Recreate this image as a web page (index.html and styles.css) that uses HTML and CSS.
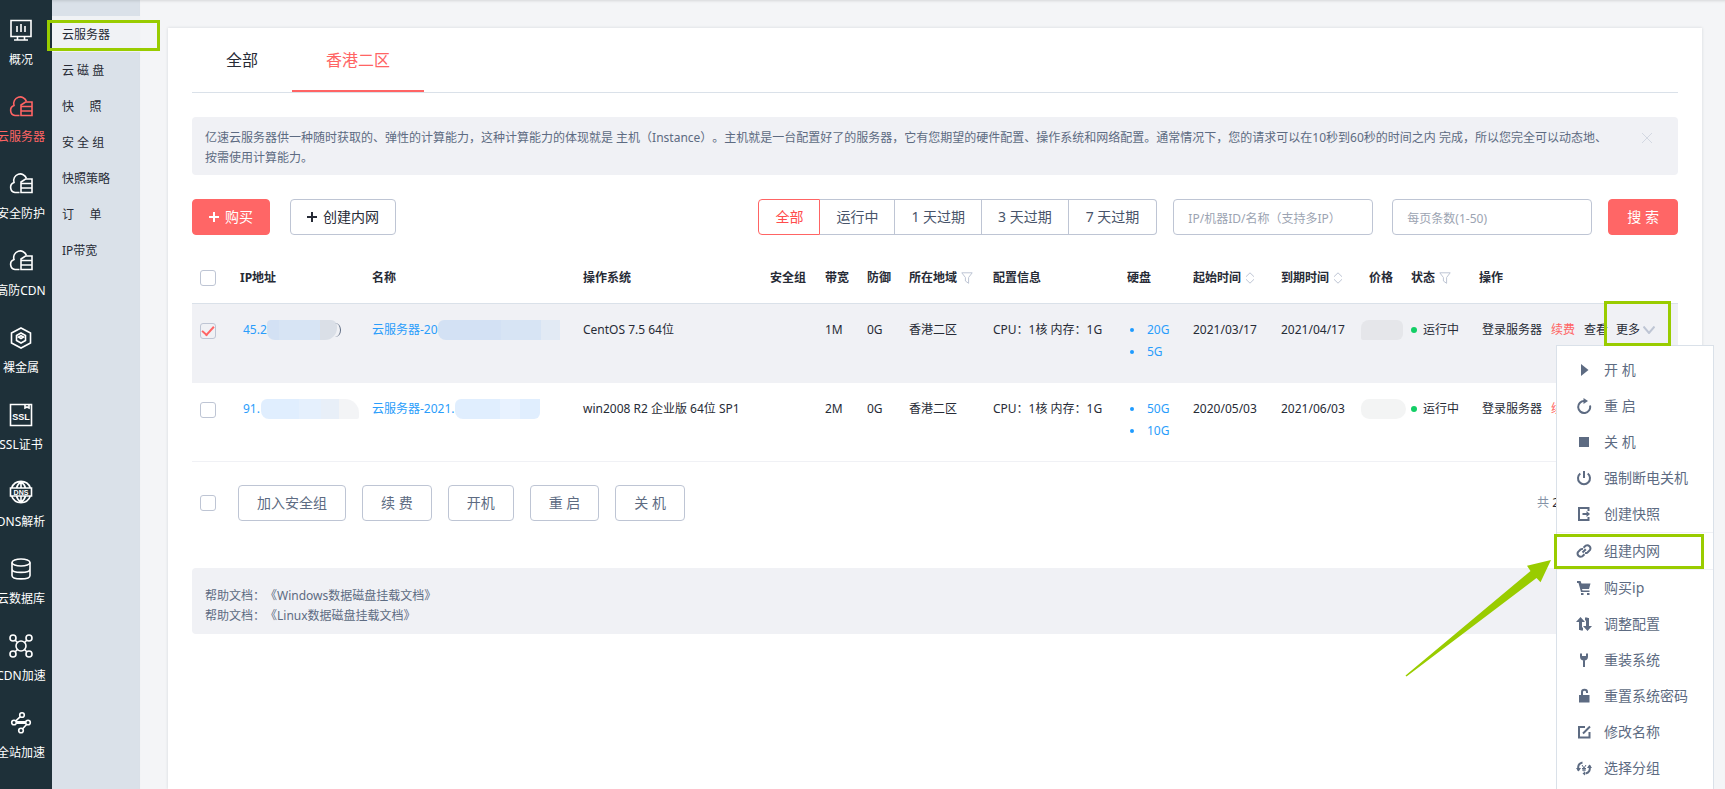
FILE: index.html
```html
<!DOCTYPE html>
<html lang="zh-CN">
<head>
<meta charset="utf-8">
<title>云服务器</title>
<link rel="stylesheet" href="styles.css">
</head>
<body>
<svg class="defs" aria-hidden="true">
  <symbol id="cloud" viewBox="0 0 24 24"><path d="M10.500 20.500H6A5.200 5.200 0 0 1 5 10.500 6.500 6.500 0 0 1 17.500 6.500"/><path d="M12 20.500V10L16.500 7H23V20.500ZM12.500 11.500H23M12.500 16H23"/></symbol>
  <symbol id="funnel" viewBox="0 0 12 12"><path d="M.8.8H11.200L7.600 5.500V11.300L4.400 9V5.500Z"/></symbol>
  <symbol id="sort" viewBox="0 0 10 12"><path d="M1 4.700 5 .8 9 4.700M1 7.300 5 11.200 9 7.300"/></symbol>
</svg>
<div class="app">
  <nav class="rail" aria-label="产品">
    <a class="rail-item" href="#"><svg class="line" viewBox="0 0 24 24"><path d="M2 2.500H22V18.500H2ZM8 8V14M12 6V14M16 8V14M8.500 19V22M15.500 19V22M5 22H19"/></svg><span>概况</span></a>
    <a class="rail-item active" href="#"><svg class="line"><use href="#cloud"/></svg><span>云服务器</span></a>
    <a class="rail-item" href="#"><svg class="line"><use href="#cloud"/></svg><span>安全防护</span></a>
    <a class="rail-item" href="#"><svg class="line"><use href="#cloud"/></svg><span>高防CDN</span></a>
    <a class="rail-item" href="#"><svg class="line" viewBox="0 0 24 24"><path d="M12 2 21.500 7V17L12 22 2.500 17V7Z"/><path d="M12 7 16.500 9.500V14.500L12 17 7.500 14.500V9.500Z"/><path d="M9.500 11 12 12.500 14.500 11 12 9.700Z"/></svg><span>裸金属</span></a>
    <a class="rail-item" href="#"><svg class="line" viewBox="0 0 24 24"><path d="M1.500 1.500H22.500V22.500H1.500ZM16 2V5L18 4 20 5V2"/><text class="ssl" x="12" y="17" text-anchor="middle">SSL</text></svg><span>SSL证书</span></a>
    <a class="rail-item" href="#"><svg class="line" viewBox="0 0 24 24"><path d="M2.600 8A10 10 0 0 1 21.400 8M2.600 16A10 10 0 0 0 21.400 16M1.500 8H22.500V16H1.500ZM7.500 8Q8.500 4 12 2 15.500 4 16.500 8M7.500 16Q8.500 20 12 22 15.500 20 16.500 16M12 2V8M12 16V22"/><text class="dns" x="12" y="14.500" text-anchor="middle">DNS</text></svg><span>DNS解析</span></a>
    <a class="rail-item" href="#"><svg class="line" viewBox="0 0 24 24"><ellipse cx="12" cy="5.500" rx="9" ry="3.500"/><path d="M3 5.500V18.500C3 23 21 23 21 18.500V5.500M3 12C3 16.500 21 16.500 21 12"/></svg><span>云数据库</span></a>
    <a class="rail-item" href="#"><svg class="line" viewBox="0 0 24 24"><circle cx="12" cy="12" r="5"/><circle cx="4" cy="4" r="3"/><circle cx="20" cy="4" r="3"/><circle cx="4" cy="20" r="3"/><circle cx="20" cy="20" r="3"/><path d="M6.200 6.200 8.500 8.500M17.800 6.200 15.500 8.500M6.200 17.800 8.500 15.500M17.800 17.800 15.500 15.500"/></svg><span>CDN加速</span></a>
    <a class="rail-item" href="#"><svg class="line" viewBox="0 0 24 24"><circle cx="13" cy="4" r="2.300"/><circle cx="5" cy="11.500" r="2.300"/><circle cx="19" cy="11.500" r="2.300"/><circle cx="12" cy="19.500" r="2.300"/><path d="M11.300 5.700 6.800 9.800M7.400 10.800H16.700M7.400 12.300H16.700M17.500 13.500 13.700 17.800"/></svg><span>全站加速</span></a>
  </nav>

  <nav class="submenu" aria-label="云服务器">
    <a class="active" href="#">云服务器</a>
    <a href="#">云 磁 盘</a>
    <a href="#">快 &nbsp; &nbsp; 照</a>
    <a href="#">安 全 组</a>
    <a href="#">快照策略</a>
    <a href="#">订 &nbsp; &nbsp; 单</a>
    <a href="#">IP带宽</a>
  </nav>

  <main class="page">
    <section class="card">
      <div class="tabs" role="tablist">
        <button class="tab" type="button" role="tab" aria-selected="false">全部</button>
        <button class="tab active" type="button" role="tab" aria-selected="true">香港二区</button>
      </div>

      <div class="notice">
        <p>亿速云服务器供一种随时获取的、弹性的计算能力，这种计算能力的体现就是 主机（Instance）。主机就是一台配置好了的服务器，它有您期望的硬件配置、操作系统和网络配置。通常情况下，您的请求可以在10秒到60秒的时间之内 完成，所以您完全可以动态地、按需使用计算能力。</p>
        <button class="close" type="button" aria-label="关闭"><svg viewBox="0 0 12 12"><path d="M1 1 11 11M11 1 1 11"/></svg></button>
      </div>

      <div class="toolbar">
        <button class="btn primary" type="button"><svg class="plus" viewBox="0 0 10 10"><path d="M5 0V10M0 5H10"/></svg>购买</button>
        <button class="btn dark" type="button"><svg class="plus" viewBox="0 0 10 10"><path d="M5 0V10M0 5H10"/></svg>创建内网</button>
        <div class="filters">
          <div class="segments">
            <button class="seg active" type="button">全部</button>
            <button class="seg" type="button">运行中</button>
            <button class="seg" type="button">1 天过期</button>
            <button class="seg" type="button">3 天过期</button>
            <button class="seg" type="button">7 天过期</button>
          </div>
          <input class="field" type="text" aria-label="IP/机器ID/名称" placeholder="IP/机器ID/名称（支持多IP）">
          <input class="field" type="text" aria-label="每页条数" placeholder="每页条数(1-50)">
          <button class="btn primary search" type="button">搜 索</button>
        </div>
      </div>

      <table class="grid">
        <colgroup>
          <col class="c-check"><col class="c-ip"><col class="c-name"><col class="c-os"><col class="c-sec"><col class="c-short"><col class="c-short"><col class="c-region"><col class="c-conf"><col class="c-disk"><col class="c-date"><col class="c-date"><col class="c-short"><col class="c-status"><col class="c-ops">
        </colgroup>
        <thead>
          <tr>
            <th class="check"><input class="box" type="checkbox" aria-label="全选"></th>
            <th>IP地址</th><th>名称</th><th>操作系统</th><th>安全组</th><th>带宽</th><th>防御</th>
            <th><span class="sortable">所在地域<svg class="funnel"><use href="#funnel"/></svg></span></th>
            <th>配置信息</th><th>硬盘</th>
            <th><span class="sortable">起始时间<svg class="sort"><use href="#sort"/></svg></span></th>
            <th><span class="sortable">到期时间<svg class="sort"><use href="#sort"/></svg></span></th>
            <th>价格</th>
            <th><span class="sortable">状态<svg class="funnel"><use href="#funnel"/></svg></span></th>
            <th>操作</th>
          </tr>
        </thead>
        <tbody>
          <tr class="selected">
            <td class="check"><input class="box" type="checkbox" aria-label="选择第一台" checked></td>
            <td class="ip"><span class="masked"><a href="#">45.2</a><i class="mask m-ip1"></i><i class="ring"></i></span></td>
            <td><span class="masked"><a href="#">云服务器-20</a><i class="mask m-name1"></i></span></td>
            <td>CentOS 7.5 64位</td><td></td><td>1M</td><td>0G</td><td>香港二区</td><td>CPU：1核 内存：1G</td>
            <td><ul class="disks"><li>20G</li><li>5G</li></ul></td>
            <td>2021/03/17</td><td>2021/04/17</td>
            <td><i class="mask m-price1"></i></td>
            <td><span class="state">运行中</span></td>
            <td>
              <div class="ops">
                <a class="login" href="#">登录服务器</a><a class="renew" href="#">续费</a><a class="view" href="#">查看</a>
                <div class="more">
                  <button class="more-btn" type="button" aria-expanded="true">更多<svg viewBox="0 0 12 8"><path d="M.5.500 6 7 11.500.500"/></svg></button>
                  <i class="mark mark-more"></i>
                  <div class="menu">
                    <button type="button"><svg viewBox="0 0 16 16"><path class="fill" d="M5 2 12.500 8 5 14Z"/></svg>开 机</button>
                    <button type="button"><svg viewBox="0 0 16 16"><path d="M14 7.500A6 6 0 1 1 8.500 3"/><path class="fill" d="M7.500 0 12 3 7.500 6Z"/></svg>重 启</button>
                    <button type="button"><svg viewBox="0 0 16 16"><path class="fill" d="M3 3H13V13H3Z"/></svg>关 机</button>
                    <button type="button"><svg viewBox="0 0 16 16"><path d="M4.300 3.500A6 6 0 1 0 11.700 3.500M8 1V8"/></svg>强制断电关机</button>
                    <button type="button"><svg viewBox="0 0 16 16"><path d="M12.500 5V2H3V14H12.500V11M6.500 8H12"/><path class="fill" d="M10.500 5 14 8 10.500 11Z"/></svg>创建快照</button>
                    <div class="group">
                      <button type="button"><svg viewBox="0 0 16 16"><path d="M6.500 9.500 9.800 6.200M7.500 4.800 9.800 2.600A3.200 3.200 0 0 1 14 7L11.500 9.500A2.800 2.800 0 0 1 9 10M8.500 11.200 6.200 13.400A3.200 3.200 0 0 1 2 9L4.500 6.500A2.800 2.800 0 0 1 7 6"/></svg>组建内网</button>
                      <i class="mark mark-net"></i>
                      <svg class="arrow" viewBox="0 0 147 117"><path d="M.5 115.500 125.500 11 122 5.700 146 0 135.500 22.300 131.500 18 1.500 116.500Z"/></svg>
                    </div>
                    <button type="button"><svg viewBox="0 0 16 16"><path class="fill" d="M1 1H4.500L5.500 3.500H14.500L13 9H6L6.500 10.500H13.500V12H5L2.500 3H1ZM5 13H7.500V15H5ZM11 13H13.500V15H11Z"/></svg>购买ip</button>
                    <button type="button"><svg viewBox="0 0 16 16"><path class="bold" d="M4.500 14V3M11.500 2V13M4.500 13H7M9 3H11.500"/><path class="fill" d="M0 6 4.500 1 9 6ZM7 10 11.500 15 16 10Z"/></svg>调整配置</button>
                    <button type="button"><svg viewBox="0 0 16 16"><path d="M8 6V15M5 1.500V4.500Q5 7.500 8 7.500 11 7.500 11 4.500V1.500"/><path class="fill" d="M5 4H11L9.500 8H6.500Z"/></svg>重装系统</button>
                    <button type="button"><svg viewBox="0 0 16 16"><path class="fill" d="M3 7H13.500V14.500H3Z"/><path d="M6 7V4Q6 1.800 8.500 1.800 11 1.800 11 4V5"/></svg>重置系统密码</button>
                    <button type="button"><svg viewBox="0 0 16 16"><path d="M9 3H3V13.500H13.500V8M7 9.500 14 2.500"/></svg>修改名称</button>
                    <button type="button"><svg viewBox="0 0 16 16"><path d="M2.500 10.500Q1 3.500 6.500 2.500M13.500 5.500Q15 12.500 9.500 13.500"/><path class="fill" d="M0 8H5L2.500 11.500ZM11 8H16L13.500 4.500ZM9 11.500V15.500L6.500 13.500Z"/><path class="thin" d="M6 5 8 8 10 5M8 8V11.500M6 8.500H10M6 10H10"/></svg>选择分组</button>
                  </div>
                </div>
              </div>
            </td>
          </tr>
          <tr>
            <td class="check"><input class="box" type="checkbox" aria-label="选择第二台"></td>
            <td class="ip"><span class="masked"><a href="#">91.</a><i class="mask m-ip2"></i></span></td>
            <td><span class="masked"><a href="#">云服务器-2021.</a><i class="mask m-name2"></i></span></td>
            <td>win2008 R2 企业版 64位 SP1</td><td></td><td>2M</td><td>0G</td><td>香港二区</td><td>CPU：1核 内存：1G</td>
            <td><ul class="disks"><li>50G</li><li>10G</li></ul></td>
            <td>2020/05/03</td><td>2021/06/03</td>
            <td><i class="mask m-price2"></i></td>
            <td><span class="state">运行中</span></td>
            <td><div class="ops"><a class="login" href="#">登录服务器</a><a class="renew" href="#">续费</a></div></td>
          </tr>
        </tbody>
      </table>

      <div class="batch">
        <input class="box" type="checkbox" aria-label="批量选择">
        <div class="batch-actions">
          <button class="btn" type="button">加入安全组</button>
          <button class="btn" type="button">续 费</button>
          <button class="btn" type="button">开机</button>
          <button class="btn" type="button">重 启</button>
          <button class="btn" type="button">关 机</button>
        </div>
        <p class="total">共 <b>2</b> 条</p>
      </div>

      <div class="help">
        <p>帮助文档：<a href="#">《Windows数据磁盘挂载文档》</a></p>
        <p>帮助文档：<a href="#">《Linux数据磁盘挂载文档》</a></p>
      </div>
    </section>
  </main>
  <i class="mark mark-side"></i>
</div>
</body>
</html>
```

FILE: styles.css
```css
* { box-sizing: border-box; }

body {
  margin: 0;
  height: 100vh;
  overflow: hidden;
  background: #f4f5f7;
  color: #272b36;
  font: 12px/20px "Noto Sans", "Noto Sans CJK SC", sans-serif;
  text-spacing-trim: space-all;
}

a { color: inherit; text-decoration: none; }
p, ul { margin: 0; padding: 0; }
button, input { font: inherit; color: inherit; }
button { margin: 0; padding: 0; border: 0; background: none; cursor: pointer; white-space: nowrap; }
svg { flex: none; fill: none; stroke: currentColor; }
.defs { position: absolute; width: 0; height: 0; }

.app { display: flex; position: relative; height: 100%; }

/* product rail */
.rail {
  flex: none;
  width: 52px;
  padding-right: 10px;
  background: #1e3039;
  color: #fff;
}
.rail-item {
  display: flex;
  flex-direction: column;
  align-items: center;
  gap: 8px;
  height: 77px;
  padding-top: 18px;
  line-height: 20px;
  white-space: nowrap;
}
.rail-item.active { color: #ff6464; }
.line { width: 24px; height: 24px; stroke-width: 1.6; }
.ssl, .dns { fill: currentColor; stroke: none; font-family: "Liberation Sans", sans-serif; font-weight: bold; }
.ssl { font-size: 9px; }
.dns { font-size: 7px; }

/* second-level menu */
.submenu {
  flex: none;
  width: 88px;
  padding-top: 16px;
  background: #dae1e9;
}
.submenu a { display: block; height: 36px; padding-left: 10px; line-height: 38px; }
.submenu a.active { background: #f0f2f5; }

/* page */
.page { flex: 1; min-width: 0; padding: 28px 23px 0 28px; }
.submenu, .page { box-shadow: inset 0 3px 3px -2px rgba(0, 0, 0, .12); }
.card {
  min-height: 100%;
  padding: 0 24px;
  background: #fff;
  box-shadow: 0 0 3px rgba(30, 40, 60, .14);
}

.tabs { display: flex; border-bottom: 1px solid #dae1e9; }
.tab { height: 64px; padding: 2px 34px 0; border-bottom: 2px solid transparent; font-size: 16px; }
.tab.active { color: #ff6464; border-color: #ff6464; }

.notice, .help { border-radius: 4px; background: #f0f1f5; color: #5d6b82; }
.notice {
  display: flex;
  align-items: flex-start;
  justify-content: space-between;
  gap: 30px;
  margin-top: 24px;
  padding: 11px 25px 7px 13px;
}
.close { display: flex; padding: 4px 0; color: #d3d8e2; }
.close svg { width: 12px; height: 12px; }

/* toolbar */
.toolbar { display: flex; gap: 20px; margin-top: 24px; }
.btn {
  display: inline-flex;
  align-items: center;
  justify-content: center;
  gap: 6px;
  height: 36px;
  padding: 0 18px;
  border: 1px solid #bec5d4;
  border-radius: 4px;
  background: #fff;
  color: #5d6b82;
  font-size: 14px;
}
.btn.dark { padding: 0 16px; color: #272b36; }
.btn.primary { border-color: #ff6666; background: #ff6666; color: #fff; padding: 0 16px; }
.btn.search { padding: 0 18px; }
.plus { width: 10px; height: 10px; stroke-width: 2; }

.filters { display: flex; gap: 16px; margin-left: auto; }
.segments { display: flex; }
.seg {
  height: 36px;
  padding: 0 16px;
  border: 1px solid #bec5d4;
  border-left-width: 0;
  color: #48546a;
  font-size: 14px;
}
.seg:last-child { padding: 0 17px; border-radius: 0 4px 4px 0; }
.seg.active { border: 1px solid #ff6464; border-radius: 4px 0 0 4px; color: #ff4c4c; }
.field {
  width: 200px;
  height: 36px;
  padding: 2px 14px 0;
  border: 1px solid #bec5d4;
  border-radius: 4px;
  background: #fff;
  outline: none;
}
.field + .field { margin-left: 3px; }
.field::placeholder { color: #9ca4b2; opacity: 1; }

/* check boxes */
.box {
  appearance: none;
  display: grid;
  place-items: center;
  width: 16px;
  height: 16px;
  margin: 0;
  border: 1px solid #bec5d4;
  border-radius: 3px;
}
.box:checked::after {
  content: "";
  width: 10px;
  height: 5px;
  margin-bottom: 3px;
  border: solid #ff6464;
  border-width: 0 0 2px 2px;
  transform: rotate(-48deg);
}

/* server table */
.grid { width: 100%; margin-top: 16px; border-collapse: collapse; table-layout: fixed; line-height: 22px; }
.c-check { width: 48px; }
.c-ip { width: 132px; }
.c-name { width: 211px; }
.c-os { width: 187px; }
.c-sec { width: 55px; }
.c-short { width: 42px; }
.c-region { width: 84px; }
.c-conf { width: 134px; }
.c-disk { width: 66px; }
.c-date { width: 88px; }
.c-status { width: 68px; }
.c-ops { width: 199px; }
.grid th, .grid td { padding: 0; text-align: left; white-space: nowrap; }
.grid th { height: 52px; padding-top: 3px; border-bottom: 1px solid #dae1e9; }
.grid td { height: 79px; padding-top: 15px; vertical-align: top; border-bottom: 1px solid #f0f1f5; }
.grid .check { padding-left: 8px; }
.grid td.check { padding-top: 19px; }
.grid td.ip { padding-left: 3px; }
.selected { background: #f0f1f5; }
.grid td a { color: #2a9dfb; }

.sortable { display: flex; align-items: center; gap: 4px; }
.funnel { width: 12px; height: 12px; color: #bec5d4; }
.sort { width: 10px; height: 12px; color: #bec5d4; }

.masked { display: flex; align-items: center; }
.mask { display: block; flex: none; height: 20px; border-radius: 6px 0 0 8px; }
.m-ip1 { width: 70px; border-radius: 4px 6px 12px 8px; background: linear-gradient(90deg, #d3e1f4 12px, #d7e4f4 12px 53px, #dadfe7 53px); }
.m-name1 { width: 122px; background: linear-gradient(90deg, #d3e1f4 63px, #d7e4f4 63px 103px, #e2eaf4 103px); }
.m-ip2 { width: 98px; margin-left: 1px; border-radius: 6px 14px 2px 8px; background: linear-gradient(90deg, #e0eefe 38px, #e5f0fd 38px 60px, #e8eff8 60px 78px, #f3f4f6 78px); }
.m-name2 { width: 85px; border-radius: 6px 0 6px 8px; background: linear-gradient(90deg, #e0eefe 45px, #e8f2ff 45px 65px, #e0eefe 65px); }
.m-price1, .m-price2 { margin-left: -8px; border-radius: 8px 6px 6px 2px; }
.m-price1 { width: 42px; margin-top: 1px; background: #e5e6ea; }
.m-price2 { width: 45px; margin-top: 1px; border-radius: 10px 12px 12px 10px; background: #f3f4f4; }
.ring { width: 12px; height: 14px; margin-left: -8px; border-right: 1px solid #5d6b82; border-radius: 50%; }

.disks { list-style: none; color: #2a9dfb; }
.disks li { display: flex; align-items: center; gap: 13px; padding-left: 3px; }
.disks li::before { content: ""; width: 4px; height: 4px; border-radius: 50%; background: #1e9bff; }

.state { display: flex; align-items: center; gap: 6px; }
.state::before { content: ""; width: 6px; height: 6px; border-radius: 50%; background: #13ce66; }

.ops { display: flex; padding-left: 3px; }
.ops > a { margin-right: 9px; }
.grid .ops .login, .grid .ops .view { color: #272b36; }
.grid .ops .renew { color: #ff6464; }
.grid .ops .view { margin-right: 8px; }
.more { position: relative; }
.more-btn { display: flex; align-items: center; gap: 3px; line-height: 22px; }
.more-btn svg { width: 12px; height: 8px; color: #bec5d4; stroke-width: 2; }

/* drop-down menu of a row */
.menu {
  position: absolute;
  top: 26px;
  left: -60px;
  z-index: 2;
  width: 158px;
  padding: 6px 0;
  border: 1px solid #dae1e9;
  background: #fff;
  color: #5d6b82;
}
.menu button {
  display: flex;
  align-items: center;
  gap: 12px;
  width: 100%;
  height: 36px;
  padding-left: 19px;
  font-size: 14px;
}
.menu button svg { width: 16px; height: 16px; stroke-width: 2; }
.menu .fill { fill: currentColor; stroke: none; }
.menu .thin { stroke-width: 1; }
.menu .bold { stroke-width: 3; }
.group { position: relative; border: solid #f0f1f5; border-width: 1px 0; }

/* annotation marks */
.mark { position: absolute; border: 3px solid #99cc00; pointer-events: none; }
.mark-side { top: 20px; left: 47px; width: 113px; height: 31px; }
.mark-more { top: -18px; left: -12px; z-index: 3; width: 67px; height: 45px; }
.mark-net { top: 1px; left: -3px; width: 150px; height: 35px; }
.arrow { position: absolute; top: 27px; left: -152px; width: 147px; height: 117px; fill: #99cc00; stroke: none; }

/* batch actions */
.batch { display: flex; align-items: center; gap: 22px; margin-top: 23px; padding-left: 8px; }
.batch-actions { display: flex; gap: 16px; }
.total { width: 141px; margin-left: auto; color: #8492a6; }
.total b { color: #272b36; font-weight: normal; }

.help { margin-top: 47px; padding: 18px 13px 8px; }
```
